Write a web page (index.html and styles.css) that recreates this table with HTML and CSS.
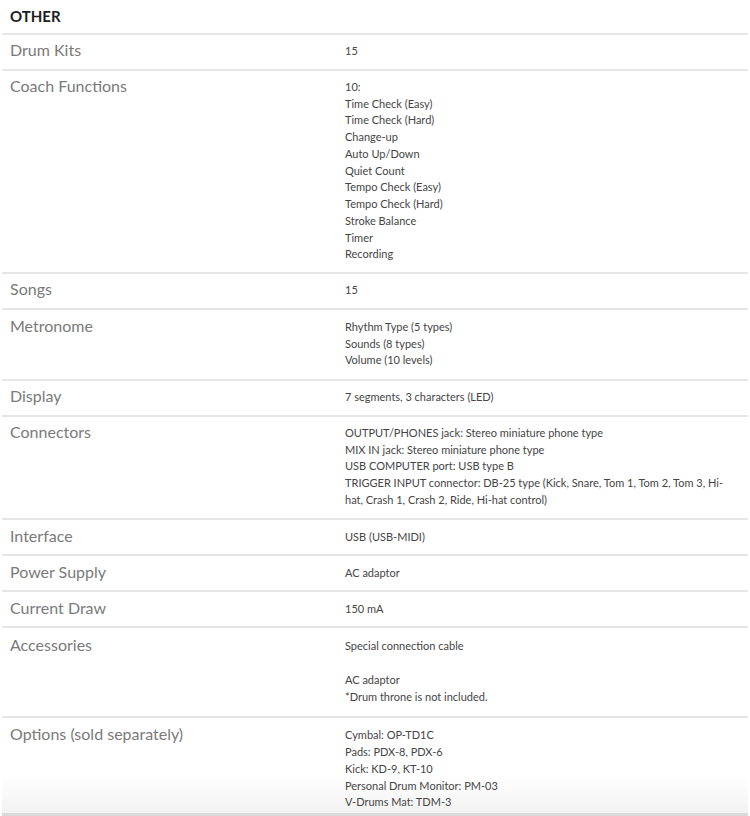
FILE: index.html
```html
<!DOCTYPE html>
<html lang="en">

<head>
  <meta charset="UTF-8">
  <meta name="viewport" content="width=device-width, initial-scale=1.0">
  <title>Specifications - Other</title>
  <link rel="stylesheet" href="styles.css">
</head>

<body>
  <div class="specs">
    <h2 class="specs-title">OTHER</h2>

    <div class="spec-row">
      <div class="spec-label">Drum Kits</div>
      <div class="spec-value">15</div>
    </div>

    <div class="spec-row">
      <div class="spec-label">Coach Functions</div>
      <div class="spec-value">
        10:<br>
        Time Check (Easy)<br>
        Time Check (Hard)<br>
        Change-up<br>
        Auto Up/Down<br>
        Quiet Count<br>
        Tempo Check (Easy)<br>
        Tempo Check (Hard)<br>
        Stroke Balance<br>
        Timer<br>
        Recording
      </div>
    </div>

    <div class="spec-row">
      <div class="spec-label">Songs</div>
      <div class="spec-value">15</div>
    </div>

    <div class="spec-row spec-row-loose">
      <div class="spec-label">Metronome</div>
      <div class="spec-value">
        Rhythm Type (5 types)<br>
        Sounds (8 types)<br>
        Volume (10 levels)
      </div>
    </div>

    <div class="spec-row">
      <div class="spec-label">Display</div>
      <div class="spec-value">7 segments, 3 characters (LED)</div>
    </div>

    <div class="spec-row">
      <div class="spec-label">Connectors</div>
      <div class="spec-value">
        OUTPUT/PHONES jack: Stereo miniature phone type<br>
        MIX IN jack: Stereo miniature phone type<br>
        USB COMPUTER port: USB type B<br>
        TRIGGER INPUT connector: DB-25 type (Kick, Snare, Tom 1, Tom 2, Tom 3, Hi-hat, Crash 1, Crash 2, Ride, Hi-hat control)
      </div>
    </div>

    <div class="spec-row spec-row-single">
      <div class="spec-label">Interface</div>
      <div class="spec-value">USB (USB-MIDI)</div>
    </div>

    <div class="spec-row spec-row-single">
      <div class="spec-label">Power Supply</div>
      <div class="spec-value">AC adaptor</div>
    </div>

    <div class="spec-row spec-row-single">
      <div class="spec-label">Current Draw</div>
      <div class="spec-value">150 mA</div>
    </div>

    <div class="spec-row spec-row-wide">
      <div class="spec-label">Accessories</div>
      <div class="spec-value">
        Special connection cable<br>
        <br>
        AC adaptor<br>
        *Drum throne is not included.
      </div>
    </div>

    <div class="spec-row spec-row-loose">
      <div class="spec-label">Options (sold separately)</div>
      <div class="spec-value">
        Cymbal: OP-TD1C<br>
        Pads: PDX-8, PDX-6<br>
        Kick: KD-9, KT-10<br>
        Personal Drum Monitor: PM-03<br>
        V-Drums Mat: TDM-3
      </div>
    </div>
  </div>
</body>

</html>
```

FILE: styles.css
```css
body {
  font-family: 'Lato', 'Liberation Sans', sans-serif;
  margin: 0;
  padding: 0;
  background: #fff;
  color: #444;
}

/* panel fades to grey at its bottom edge */
.specs {
  width: 746px;
  height: 816px;
  margin-left: 2px;
  overflow: hidden;
  background: linear-gradient(to bottom, #fff calc(100% - 40px), #f2f2f2 calc(100% - 3px), #dadada calc(100% - 3px));
}

.specs-title {
  margin: 0;
  padding: 7px 8px 8px;
  font-size: 15px;
  line-height: 18px;
  font-weight: 700;
  color: #1e1e1e;
}

.spec-row {
  display: flex;
  border-top: 2px solid #e6e6e6;
  padding: 8px 0 9px;
}

.spec-row-single {
  padding-top: 9px;
  padding-bottom: 8.5px;
}

.spec-row-loose {
  padding-top: 9px;
  padding-bottom: 10px;
}

.spec-row-wide {
  padding-top: 10px;
  padding-bottom: 11px;
}

.spec-label {
  width: 335px;
  margin-top: -2px;
  padding-left: 8px;
  font-size: 16px;
  line-height: 18px;
  color: #7a7a7a;
}

.spec-value {
  width: 385px;
  font-size: 11px;
  line-height: 16.75px;
  color: #454545;
}
```
